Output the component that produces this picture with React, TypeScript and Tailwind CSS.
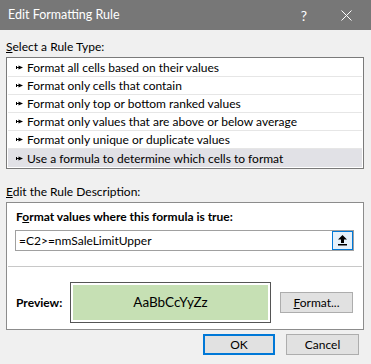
import React from "react";

const rules = [
  "Format all cells based on their values",
  "Format only cells that contain",
  "Format only top or bottom ranked values",
  "Format only values that are above or below average",
  "Format only unique or duplicate values",
  "Use a formula to determine which cells to format",
];

function RuleArrow() {
  return (
    <svg width="7" height="5" viewBox="0 0 7 5" className="shrink-0">
      <rect x="0" y="1" width="1" height="3" fill="#000" />
      <rect x="0" y="2" width="3" height="1" fill="#000" />
      <polygon points="2.5,0.5 7,2.5 2.5,4.5" fill="#000" />
    </svg>
  );
}

export default function App() {
  return (
    <div
      className="w-[371px] h-[364px] bg-[#f0f0f0] flex flex-col text-[12px] text-black overflow-hidden"
      style={{ fontFamily: 'Lato, "Noto Sans", sans-serif' }}
    >
      {/* title bar */}
      <div className="h-[30px] bg-[#777777] flex items-center shrink-0">
        <span className="ml-[8px] text-white text-[12.5px]">Edit Formatting Rule</span>
        <span className="ml-auto mr-[34px] text-white text-[14px]">?</span>
        <svg width="11" height="11" viewBox="0 0 11 11" className="mr-[19px]">
          <path d="M0.5 0.5 L10.5 10.5 M10.5 0.5 L0.5 10.5" stroke="#fff" strokeWidth="1" />
        </svg>
      </div>

      <div className="px-[6px] flex flex-col">
        <div className="mt-[9px] h-[16px] leading-[16px]">
          <span className="underline">S</span>elect a Rule Type:
        </div>

        <div className="mt-[2px] w-[358px] h-[112px] border border-[#7a7a7a] bg-white p-[1px] flex flex-col">
          {rules.map((r, i) => (
            <div
              key={i}
              className={
                i === rules.length - 1
                  ? "h-[18px] flex items-center gap-[4px] pl-[8px] bg-[#e1e1e6]"
                  : "h-[18px] flex items-center gap-[4px] pl-[8px] border-b border-[#e6e6e6]"
              }
            >
              <RuleArrow />
              <span className="leading-[17px]">{r}</span>
            </div>
          ))}
        </div>

        <div className="mt-[15px] h-[16px] leading-[16px]">
          <span className="underline">E</span>dit the Rule Description:
        </div>

        <div className="mt-[2px] w-[358px] h-[128px] border border-[#8c8c8c] bg-white flex flex-col">
          <div className="mt-[6px] ml-[9px] h-[16px] leading-[16px] font-bold">
            F<span className="underline">o</span>rmat values where this formula is true:
          </div>
          <div className="mt-[5px] ml-[8px] w-[339px] h-[21px] border border-[#a0a0a0] flex items-center">
            <span className="ml-[3px]">=C2&gt;=nmSaleLimitUpper</span>
            <div className="ml-auto w-[21px] h-[19px] border border-[#0078d7] bg-[#e5f1fb] flex items-center justify-center">
              <svg width="9" height="11" viewBox="0 0 9 11">
                <polygon points="4.5,0 9,4.5 6,4.5 6,8 3,8 3,4.5 0,4.5" fill="#000" />
                <rect x="0" y="9" width="9" height="1.5" fill="#000" />
              </svg>
            </div>
          </div>
          <div className="mt-[15px] mx-[1px] h-px bg-[#c8c8c8]" />
          <div className="mt-[15px] flex items-center">
            <span className="ml-[9px] w-[54px] font-bold">Preview:</span>
            <div className="w-[201px] h-[41px] border border-[#555555] p-[2px] bg-white">
              <div className="w-full h-full bg-[#c6e0b4] flex items-center justify-center text-[13.5px]">
                AaBbCcYyZz
              </div>
            </div>
            <div className="ml-[9px] w-[73px] h-[21px] border border-[#adadad] bg-[#e1e1e1] flex items-center justify-center">
              <span>
                <span className="underline">F</span>ormat...
              </span>
            </div>
          </div>
        </div>

        <div className="mt-[4px] flex justify-end gap-[11px] pr-[6px]">
          <div className="w-[72px] h-[21px] border-2 border-[#0078d7] bg-[#e1e1e1] flex items-center justify-center">
            OK
          </div>
          <div className="w-[73px] h-[21px] border border-[#adadad] bg-[#e1e1e1] flex items-center justify-center">
            Cancel
          </div>
        </div>
      </div>
    </div>
  );
}
